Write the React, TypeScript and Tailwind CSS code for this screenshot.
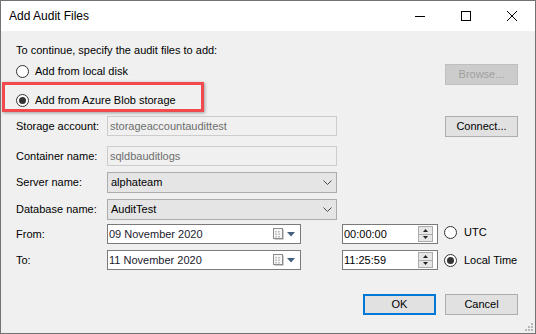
import React from "react";

function Radio({ checked }: { checked?: boolean }) {
  return (
    <span className="w-[13px] h-[13px] rounded-full border border-[#333333] bg-white flex items-center justify-center shrink-0">
      {checked && <span className="w-[7px] h-[7px] rounded-full bg-[#333333]" />}
    </span>
  );
}

function Label({ children }: { children: React.ReactNode }) {
  return <div className="w-[91px] shrink-0 text-[11px] leading-[20px] text-black">{children}</div>;
}

function Chevron() {
  return (
    <svg width="9" height="5" viewBox="0 0 9 5" className="shrink-0">
      <polyline points="0.5,0.5 4.5,4.5 8.5,0.5" fill="none" stroke="#4a4a4a" strokeWidth="1" />
    </svg>
  );
}

function DisabledInput({ value }: { value: string }) {
  return (
    <div className="w-[230px] h-[20px] border border-[#cccccc] bg-[#f0f0f0] pl-[2px] text-[11px] leading-[18px] text-[#6d6d6d]">
      {value}
    </div>
  );
}

function Combo({ value }: { value: string }) {
  return (
    <div className="w-[230px] h-[21px] border border-[#acacac] bg-[#e5e5e5] pl-[3px] pr-[4px] flex items-center justify-between text-[11px] text-black">
      <span>{value}</span>
      <Chevron />
    </div>
  );
}

function CalendarIcon() {
  return (
    <svg width="11" height="12" viewBox="0 0 11 12" className="shrink-0">
      <rect x="1.5" y="1.5" width="9" height="10" fill="#9a9a9a" />
      <rect x="0.5" y="0.5" width="9" height="10" fill="#f6f6f6" stroke="#8c8c8c" />
      <rect x="2" y="3" width="2" height="1.5" fill="#c4c4c4" />
      <rect x="5" y="3" width="2" height="1.5" fill="#c4c4c4" />
      <rect x="2" y="5.5" width="2" height="1.5" fill="#c4c4c4" />
      <rect x="5" y="5.5" width="2" height="1.5" fill="#c4c4c4" />
      <rect x="2" y="8" width="2" height="1.5" fill="#c4c4c4" />
      <rect x="5" y="8" width="2" height="1.5" fill="#c4c4c4" />
    </svg>
  );
}

function DateBox({ value }: { value: string }) {
  return (
    <div className="w-[194px] h-[20px] border border-[#7a7a7a] bg-white pl-[1px] pr-[5px] flex items-center justify-between text-[11px] text-[#1a1a2e]">
      <span>{value}</span>
      <div className="flex items-center gap-[3px]">
        <CalendarIcon />
        <svg width="8" height="5" viewBox="0 0 8 5">
          <polygon points="0,0 8,0 4,4.5" fill="#44607f" />
        </svg>
      </div>
    </div>
  );
}

function Spinner() {
  return (
    <div className="w-[15px] h-[16px] border border-[#acacac] bg-[#e6e6e6] flex flex-col">
      <div className="flex-1 flex items-center justify-center border-b border-[#acacac]">
        <svg width="5" height="3" viewBox="0 0 5 3">
          <polygon points="0,3 5,3 2.5,0" fill="#222" />
        </svg>
      </div>
      <div className="flex-1 flex items-center justify-center">
        <svg width="5" height="3" viewBox="0 0 5 3">
          <polygon points="0,0 5,0 2.5,3" fill="#222" />
        </svg>
      </div>
    </div>
  );
}

function TimeBox({ value }: { value: string }) {
  return (
    <div className="w-[96px] h-[20px] border border-[#7a7a7a] bg-white pl-[1px] pr-[4px] flex items-center justify-between text-[11px] text-black">
      <span>{value}</span>
      <Spinner />
    </div>
  );
}

function Button({ children, className = "" }: { children: React.ReactNode; className?: string }) {
  return (
    <div className={`w-[73px] h-[21px] flex items-center justify-center text-[11px] ${className}`}>{children}</div>
  );
}

export default function App() {
  return (
    <div className="w-[536px] h-[334px] border border-[#737373] flex flex-col font-['Liberation_Sans',Arial,sans-serif] overflow-hidden">
      {/* Title bar */}
      <div className="h-[30px] bg-white flex items-center shrink-0">
        <div className="pl-[8px] text-[12px] text-black">Add Audit Files</div>
        <div className="ml-auto flex h-full">
          <div className="w-[46px] h-full flex items-center justify-center">
            <svg width="10" height="10" viewBox="0 0 10 10">
              <line x1="0" y1="5.5" x2="10" y2="5.5" stroke="#000" strokeWidth="1" />
            </svg>
          </div>
          <div className="w-[46px] h-full flex items-center justify-center">
            <svg width="10" height="10" viewBox="0 0 10 10">
              <rect x="0.5" y="0.5" width="9" height="9" fill="none" stroke="#000" strokeWidth="1" />
            </svg>
          </div>
          <div className="w-[46px] h-full flex items-center justify-center">
            <svg width="10" height="10" viewBox="0 0 10 10">
              <line x1="0" y1="0" x2="10" y2="10" stroke="#000" strokeWidth="1" />
              <line x1="10" y1="0" x2="0" y2="10" stroke="#000" strokeWidth="1" />
            </svg>
          </div>
        </div>
      </div>

      {/* Body */}
      <div className="flex-1 bg-[#f0f0f0] pl-[15px] pr-[17px] flex flex-col relative text-black">
        <div className="mt-[10px] h-[18px] text-[11px] leading-[18px]">To continue, specify the audit files to add:</div>

        <div className="mt-[5px] h-[21px] flex items-start justify-between">
          <div className="mt-[1px] flex items-center gap-[6px] h-[13px] text-[11px]">
            <Radio />
            <span>Add from local disk</span>
          </div>
          <Button className="bg-[#cccccc] border border-[#bfbfbf] text-[#a0a0a0]">Browse...</Button>
        </div>

        <div className="mt-[6px] h-[18px] relative flex items-center">
          <div className="absolute left-[-14px] top-[-9px] w-[202px] h-[30px] border-[3px] border-[#f04a4f] shadow-[1px_1px_3px_rgba(0,0,0,0.35)]" />
          <div className="flex items-center gap-[6px] text-[11px]">
            <Radio checked />
            <span>Add from Azure Blob storage</span>
          </div>
        </div>

        <div className="mt-[7px] h-[21px] flex items-start">
          <Label>Storage account:</Label>
          <DisabledInput value="storageaccountaudittest" />
          <Button className="ml-auto bg-[#e1e1e1] border border-[#adadad]">Connect...</Button>
        </div>

        <div className="mt-[9px] h-[20px] flex items-start">
          <Label>Container name:</Label>
          <DisabledInput value="sqldbauditlogs" />
        </div>

        <div className="mt-[6px] h-[21px] flex items-start">
          <Label>Server name:</Label>
          <Combo value="alphateam" />
        </div>

        <div className="mt-[6px] h-[21px] flex items-start">
          <Label>Database name:</Label>
          <Combo value="AuditTest" />
        </div>

        <div className="mt-[4px] h-[20px] flex items-center">
          <Label>From:</Label>
          <DateBox value="09 November 2020" />
          <div className="ml-[41px]">
            <TimeBox value="00:00:00" />
          </div>
          <div className="ml-[6px] flex items-center gap-[7px] text-[11px] -translate-y-[2px]">
            <Radio />
            <span>UTC</span>
          </div>
        </div>

        <div className="mt-[6px] h-[20px] flex items-center">
          <Label>To:</Label>
          <DateBox value="11 November 2020" />
          <div className="ml-[41px]">
            <TimeBox value="11:25:59" />
          </div>
          <div className="ml-[6px] flex items-center gap-[7px] text-[11px]">
            <Radio checked />
            <span>Local Time</span>
          </div>
        </div>

        <div className="mt-[24px] flex justify-end gap-[9px]">
          <Button className="w-[72px] bg-[#e1e1e1] border-2 border-[#0078d7]">OK</Button>
          <Button className="bg-[#e1e1e1] border border-[#adadad]">Cancel</Button>
        </div>

        <svg width="9" height="9" viewBox="0 0 9 9" className="absolute right-[2px] bottom-[2px]">
          <rect x="7" y="1" width="2" height="2" fill="#b8b8b8" />
          <rect x="4" y="4" width="2" height="2" fill="#b8b8b8" />
          <rect x="7" y="4" width="2" height="2" fill="#b8b8b8" />
          <rect x="1" y="7" width="2" height="2" fill="#b8b8b8" />
          <rect x="4" y="7" width="2" height="2" fill="#b8b8b8" />
          <rect x="7" y="7" width="2" height="2" fill="#b8b8b8" />
        </svg>
      </div>
    </div>
  );
}
